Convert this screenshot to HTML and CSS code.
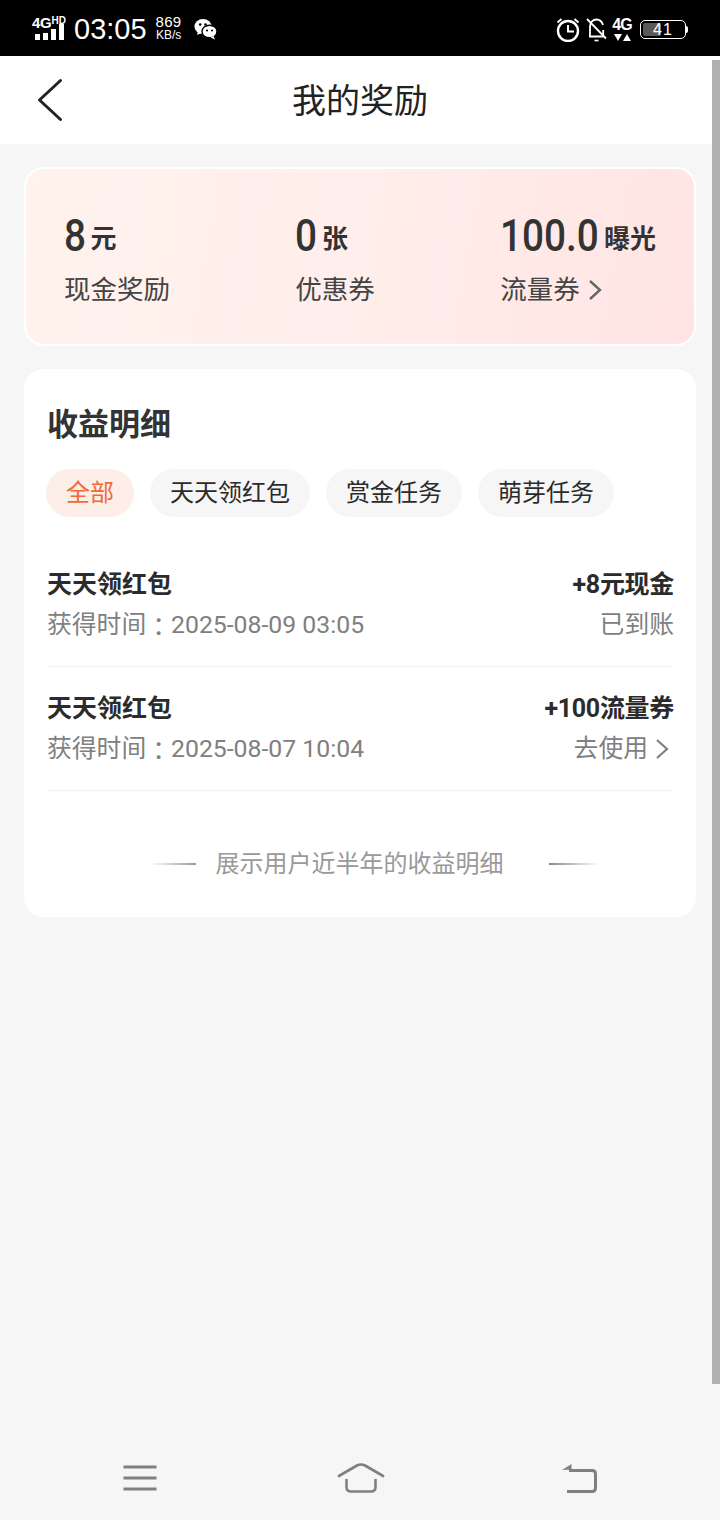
FILE: index.html
```html
<!DOCTYPE html>
<html lang="zh-CN">
<head>
<meta charset="utf-8">
<title>我的奖励</title>
<link rel="stylesheet" href="styles.css">
</head>
<body>
<div class="phone">
  <div class="statusbar">
    <div class="status-left">
      <div class="signal">
        <div class="net"><span class="net-4g">4G</span><span class="net-hd">HD</span></div>
        <div class="bars"><i class="b1"></i><i class="b2"></i><i class="b3"></i><i class="b4"></i></div>
      </div>
      <span class="clock">03:05</span>
      <div class="speed"><span class="speed-n">869</span><span class="speed-u">KB/s</span></div>
      <svg class="wechat" width="24" height="24" viewBox="0 0 24 24"><ellipse cx="9" cy="9.5" rx="8.6" ry="7.6" fill="#fff"/><path d="M4 14l-1 4 4.500-2z" fill="#fff"/><ellipse cx="15.500" cy="14.500" rx="7.500" ry="6.300" fill="#fff" stroke="#000" stroke-width="1.400"/><path d="M19.500 19l1.500 3.500-4.500-2z" fill="#fff"/><circle cx="6.200" cy="7.500" r="1.300" fill="#000"/><circle cx="11.500" cy="7.500" r="1.300" fill="#000"/><circle cx="13" cy="13.500" r="1.100" fill="#000"/><circle cx="18" cy="13.500" r="1.100" fill="#000"/></svg>
    </div>
    <div class="status-right">
      <svg class="alarm" width="24" height="25" viewBox="0 0 24 25" fill="none" stroke="#fff"><circle cx="12" cy="14" r="10" stroke-width="2.400"/><path d="M12 8v6.500h6" stroke-width="2"/><path d="M1.500 5.500L5.500 2M22.500 5.500L18.500 2" stroke-width="2"/></svg>
      <svg class="bell" width="22" height="25" viewBox="0 0 22 25" fill="none" stroke="#fff" stroke-width="1.800"><path d="M3 19.500h14.500M4 19.500V9.500C4 5 7 2.500 10.500 2.500S16 4.500 17 8M17.200 13v5"/><path d="M1 2l19 19.500" stroke-width="1.800"/><path d="M8.500 23.500h4" stroke-width="1.600"/></svg>
      <div class="net-right"><span class="net-r-4g">4G</span><div class="arrows"><i class="arrow-down"></i><i class="arrow-up"></i></div></div>
      <div class="battery"><div class="battery-body"><div class="battery-fill"></div><span class="battery-n">41</span></div><i class="battery-cap"></i></div>
    </div>
  </div>

  <header class="navbar">
    <svg class="back" width="28" height="44" viewBox="0 0 28 44" fill="none"><path d="M24.500 2.500L3.500 22l21 19.500" stroke="#222" stroke-width="3" stroke-linecap="round" stroke-linejoin="round"/></svg>
    <h1 class="nav-title">我的奖励</h1>
  </header>

  <main class="content">
    <section class="stats">
      <div class="stat">
        <div class="stat-value"><span class="stat-num">8</span><span class="stat-unit">元</span></div>
        <div class="stat-label">现金奖励</div>
      </div>
      <div class="stat">
        <div class="stat-value"><span class="stat-num">0</span><span class="stat-unit">张</span></div>
        <div class="stat-label">优惠券</div>
      </div>
      <div class="stat">
        <div class="stat-value"><span class="stat-num stat-num-wide">100.0</span><span class="stat-unit">曝光</span></div>
        <div class="stat-label">流量券<svg class="chev chev-stat" width="14" height="22" viewBox="0 0 14 22" fill="none"><path d="M2 2l10 9-10 9" stroke="#666" stroke-width="2.400"/></svg></div>
      </div>
    </section>

    <section class="detail">
      <h2 class="detail-title">收益明细</h2>
      <div class="tabs">
        <span class="tab tab-active">全部</span>
        <span class="tab">天天领红包</span>
        <span class="tab">赏金任务</span>
        <span class="tab">萌芽任务</span>
      </div>
      <div class="row">
        <div class="row-main">
          <div class="row-title">天天领红包</div>
          <div class="row-sub">获得时间<span class="colon">：</span>2025-08-09 03:05</div>
        </div>
        <div class="row-side">
          <div class="row-title row-title-side">+8元现金</div>
          <div class="row-sub">已到账</div>
        </div>
      </div>
      <div class="row">
        <div class="row-main">
          <div class="row-title">天天领红包</div>
          <div class="row-sub">获得时间<span class="colon">：</span>2025-08-07 10:04</div>
        </div>
        <div class="row-side">
          <div class="row-title row-title-side">+100流量券</div>
          <div class="row-sub">去使用<svg class="chev chev-row" width="14" height="22" viewBox="0 0 14 22" fill="none"><path d="M2 2l10 9-10 9" stroke="#808080" stroke-width="2.200"/></svg></div>
        </div>
      </div>
      <div class="foot">
        <i class="foot-line foot-line-l"></i>
        <span class="foot-text">展示用户近半年的收益明细</span>
        <i class="foot-line foot-line-r"></i>
      </div>
    </section>
  </main>

  <nav class="softkeys">
    <svg width="34" height="28" viewBox="0 0 34 28" fill="none" stroke="#808080" stroke-width="3"><path d="M0.500 3h33M0.500 14h33M0.500 25h33"/></svg>
    <svg class="softkey-home" width="48" height="32" viewBox="0 0 48 32" fill="none" stroke="#808080" stroke-width="2.600"><path d="M1 14.500L20 3.500c2.500-1.300 5.500-1.300 8 0L47 14.500"/><path d="M9.500 17v8c0 3 1.500 4.500 4.500 4.500h20c3 0 4.500-1.500 4.500-4.500v-8"/></svg>
    <svg width="36" height="30" viewBox="0 0 36 30" fill="none"><path d="M1 7L10.500 1v5.500z" fill="#808080"/><path d="M8 7.500h23c2.500 0 3.500 1 3.500 3.500v14c0 2.500-1 3.500-3.500 3.500H6" stroke="#808080" stroke-width="3"/></svg>
  </nav>

  <div class="scrollbar"></div>
</div>
</body>
</html>
```
FILE: styles.css
```css
* { box-sizing: border-box; }
html, body { margin: 0; padding: 0; }
body { font-family: Roboto, "Noto Sans CJK SC", sans-serif; color: #2b2b2b; }
i { display: block; }

.phone { position: relative; width: 720px; height: 1520px; background: #f6f6f6; display: flex; flex-direction: column; overflow: hidden; }

.statusbar { height: 56px; background: #000; color: #fff; display: flex; justify-content: space-between; align-items: center; padding: 0 32px; font-family: "Liberation Sans", sans-serif; flex: none; }
.status-left, .status-right { display: flex; align-items: center; }
.signal { width: 34px; height: 24px; display: flex; flex-direction: column; margin-top: -1px; }
.net { display: flex; align-items: flex-start; height: 13px; line-height: 13px; font-weight: 700; flex: none; }
.net-4g { font-size: 15px; letter-spacing: -0.300px; }
.net-hd { font-size: 10px; line-height: 9px; }
.bars { display: flex; align-items: flex-end; gap: 3px; padding-left: 3px; height: 16px; margin-top: -5px; flex: none; }
.bars i { width: 5px; background: #fff; }
.b1 { height: 6px; } .b2 { height: 7px; } .b3 { height: 11px; } .b4 { height: 16px; }
.clock { font-size: 29px; line-height: 34px; margin-left: 8px; margin-top: 1px; }
.speed { display: flex; flex-direction: column; align-items: center; margin-left: 9px; line-height: 12px; }
.speed-n { font-size: 15px; letter-spacing: 0.300px; line-height: 14px; }
.speed-u { font-size: 12px; }
.wechat { margin-left: 12px; margin-top: 1px; }

.alarm { margin-top: 2px; }
.bell { margin-left: 6px; margin-top: 2px; }
.net-right { margin-left: 4px; width: 20px; display: flex; flex-direction: column; align-items: center; margin-top: 2px; }
.net-r-4g { font-size: 16px; font-weight: 700; line-height: 14px; letter-spacing: -0.800px; }
.arrows { display: flex; gap: 1px; margin-top: 2px; }
.arrow-down { border-left: 4px solid transparent; border-right: 4px solid transparent; border-top: 7px solid #fff; }
.arrow-up { border-left: 4px solid transparent; border-right: 4px solid transparent; border-bottom: 7px solid #fff; }
.battery { margin-left: 8px; display: flex; align-items: center; margin-top: 2px; }
.battery-body { position: relative; width: 46px; height: 19px; border: 1.500px solid #fff; border-radius: 5px; display: flex; align-items: center; justify-content: center; padding: 2px; }
.battery-fill { position: absolute; left: 2px; top: 2px; bottom: 2px; width: 18px; background: #595959; border-radius: 2px; }
.battery-n { position: relative; font-size: 16px; line-height: 15px; letter-spacing: 1px; }
.battery-cap { width: 2px; height: 7px; background: #fff; border-radius: 0 2px 2px 0; }

.navbar { height: 88px; background: #fff; display: flex; align-items: center; justify-content: center; position: relative; flex: none; }
.back { position: absolute; left: 36px; top: 22px; }
.nav-title { margin: 0; font-size: 34px; line-height: 44px; font-weight: 400; color: #222; padding-top: 1px; }

.content { padding: 23px 24px 0; display: flex; flex-direction: column; gap: 23px; }

.stats { height: 179px; border: 2px solid #fff; border-radius: 20px; background: linear-gradient(100deg, #fff3ee 0%, #ffeeeb 50%, #ffe4e3 100%); display: flex; justify-content: space-between; padding: 39px 38px 0; }
.stat { display: flex; flex-direction: column; }
.stat-value { display: flex; align-items: flex-start; height: 56px; }
.stat-num { display: inline-block; font-size: 45px; line-height: 56px; font-weight: 500; color: #333; transform: scaleX(0.86); transform-origin: left center; margin-right: -4px; }
.stat-num-wide { margin-right: -16px; }
.stat-unit { font-size: 26px; line-height: 56px; font-weight: 700; color: #333; margin-left: 5px; margin-top: 3px; }
.stat-label { display: flex; align-items: center; font-size: 26.500px; line-height: 40px; color: #444; margin-top: 6px; }
.chev { flex: none; }
.chev-stat { margin-left: 8px; }
.chev-row { margin-left: 7px; margin-right: 5px; }

.detail { height: 548px; background: #fff; border-radius: 20px; padding: 31px 22px 0; }
.detail-title { margin: 0; font-size: 31px; line-height: 50px; font-weight: 700; color: #333; padding-left: 1px; }
.tabs { display: flex; gap: 16px; margin-top: 19px; }
.tab { height: 48px; line-height: 48px; border-radius: 24px; background: #f6f6f6; padding: 0 20px; font-size: 24px; color: #2b2b2b; }
.tab-active { background: #fdeee8; color: #f0693a; }

.row { height: 124px; display: flex; justify-content: space-between; border-bottom: 1px solid #f2f2f2; padding-top: 22px; }
.tabs + .row { margin-top: 26px; }
.row-main { padding-left: 1px; }
.row-title { font-size: 25px; line-height: 40px; font-weight: 700; color: #2b2b2b; }
.row-title-side { letter-spacing: -0.300px; }
.row-sub { display: flex; align-items: center; justify-content: flex-end; font-size: 24.800px; line-height: 40px; color: #808080; white-space: pre; }
.colon { font-family: "Noto Sans CJK TC", sans-serif; }
.row-side { text-align: right; }

.foot { display: flex; align-items: center; justify-content: center; margin-top: 53px; height: 40px; padding-left: 28px; }
.foot-text { font-size: 24px; line-height: 40px; color: #999; margin: 0 45px 0 20px; }
.foot-line { height: 2px; }
.foot-line-l { width: 46px; background: linear-gradient(90deg, #fff, #999); }
.foot-line-r { width: 50px; background: linear-gradient(90deg, #888, #fff); }

.softkeys { position: absolute; left: 0; right: 0; top: 1462px; height: 32px; display: flex; justify-content: space-between; align-items: center; padding: 0 123px; }
.softkey-home { margin-left: 3px; }
.scrollbar { position: absolute; right: 0; top: 60px; width: 8px; height: 1324px; background: #b0b0b0; }
```
